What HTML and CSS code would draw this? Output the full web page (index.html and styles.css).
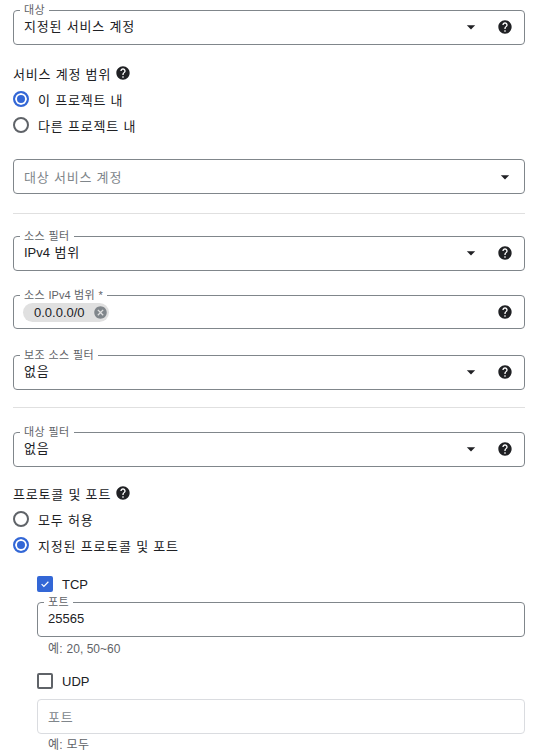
FILE: index.html
```html
<!DOCTYPE html>
<html lang="ko">
<head>
<meta charset="utf-8">
<title>방화벽 규칙</title>
<link rel="stylesheet" href="styles.css">
</head>
<body>
<div class="page">
  <fieldset class="field field-first">
    <legend class="field-label">대상</legend>
    <div class="field-row">
      <span class="field-value">지정된 서비스 계정</span>
      <svg class="arrow" viewBox="0 0 24 24"><path d="M7 10l5 5 5-5z"/></svg>
      <svg class="help" viewBox="0 0 24 24"><path d="M12 2C6.48 2 2 6.48 2 12s4.48 10 10 10 10-4.48 10-10S17.52 2 12 2zm1 17h-2v-2h2v2zm2.07-7.75l-.9.92C13.45 12.9 13 13.5 13 15h-2v-.5c0-1.1.45-2.1 1.17-2.83l1.24-1.26c.37-.36.59-.86.59-1.41 0-1.1-.9-2-2-2s-2 .9-2 2H8c0-2.21 1.79-4 4-4s4 1.79 4 4c0 .88-.36 1.68-.93 2.25z"/></svg>
    </div>
  </fieldset>

  <div class="section-title section-scope">
    <span>서비스 계정 범위</span>
    <svg class="help" viewBox="0 0 24 24"><path d="M12 2C6.48 2 2 6.48 2 12s4.48 10 10 10 10-4.48 10-10S17.52 2 12 2zm1 17h-2v-2h2v2zm2.07-7.75l-.9.92C13.45 12.9 13 13.5 13 15h-2v-.5c0-1.1.45-2.1 1.17-2.83l1.24-1.26c.37-.36.59-.86.59-1.41 0-1.1-.9-2-2-2s-2 .9-2 2H8c0-2.21 1.79-4 4-4s4 1.79 4 4c0 .88-.36 1.68-.93 2.25z"/></svg>
  </div>
  <div class="choice"><span class="radio radio-on"></span><span>이 프로젝트 내</span></div>
  <div class="choice"><span class="radio"></span><span>다른 프로젝트 내</span></div>

  <div class="input input-select">
    <span class="placeholder">대상 서비스 계정</span>
    <svg class="arrow arrow-solo" viewBox="0 0 24 24"><path d="M7 10l5 5 5-5z"/></svg>
  </div>

  <div class="divider divider-1"></div>

  <fieldset class="field field-source">
    <legend class="field-label">소스 필터</legend>
    <div class="field-row">
      <span class="field-value"><span class="latin">IPv4</span> 범위</span>
      <svg class="arrow" viewBox="0 0 24 24"><path d="M7 10l5 5 5-5z"/></svg>
      <svg class="help" viewBox="0 0 24 24"><path d="M12 2C6.48 2 2 6.48 2 12s4.48 10 10 10 10-4.48 10-10S17.52 2 12 2zm1 17h-2v-2h2v2zm2.07-7.75l-.9.92C13.45 12.9 13 13.5 13 15h-2v-.5c0-1.1.45-2.1 1.17-2.83l1.24-1.26c.37-.36.59-.86.59-1.41 0-1.1-.9-2-2-2s-2 .9-2 2H8c0-2.21 1.79-4 4-4s4 1.79 4 4c0 .88-.36 1.68-.93 2.25z"/></svg>
    </div>
  </fieldset>

  <fieldset class="field field-chips">
    <legend class="field-label">소스 <span class="latin">IPv4</span> 범위 *</legend>
    <div class="field-row">
      <span class="field-value">
        <span class="chip">
          <span class="chip-text latin">0.0.0.0/0</span>
          <svg class="chip-remove" viewBox="0 0 24 24"><path d="M12 2C6.47 2 2 6.47 2 12s4.47 10 10 10 10-4.47 10-10S17.53 2 12 2zm5 13.59L15.59 17 12 13.41 8.41 17 7 15.59 10.59 12 7 8.41 8.41 7 12 10.59 15.59 7 17 8.41 13.41 12 17 15.59z"/></svg>
        </span>
      </span>
      <svg class="help" viewBox="0 0 24 24"><path d="M12 2C6.48 2 2 6.48 2 12s4.48 10 10 10 10-4.48 10-10S17.52 2 12 2zm1 17h-2v-2h2v2zm2.07-7.75l-.9.92C13.45 12.9 13 13.5 13 15h-2v-.5c0-1.1.45-2.1 1.17-2.83l1.24-1.26c.37-.36.59-.86.59-1.41 0-1.1-.9-2-2-2s-2 .9-2 2H8c0-2.21 1.79-4 4-4s4 1.79 4 4c0 .88-.36 1.68-.93 2.25z"/></svg>
    </div>
  </fieldset>

  <fieldset class="field field-second">
    <legend class="field-label">보조 소스 필터</legend>
    <div class="field-row">
      <span class="field-value">없음</span>
      <svg class="arrow" viewBox="0 0 24 24"><path d="M7 10l5 5 5-5z"/></svg>
      <svg class="help" viewBox="0 0 24 24"><path d="M12 2C6.48 2 2 6.48 2 12s4.48 10 10 10 10-4.48 10-10S17.52 2 12 2zm1 17h-2v-2h2v2zm2.07-7.75l-.9.92C13.45 12.9 13 13.5 13 15h-2v-.5c0-1.1.45-2.1 1.17-2.83l1.24-1.26c.37-.36.59-.86.59-1.41 0-1.1-.9-2-2-2s-2 .9-2 2H8c0-2.21 1.79-4 4-4s4 1.79 4 4c0 .88-.36 1.68-.93 2.25z"/></svg>
    </div>
  </fieldset>

  <div class="divider divider-2"></div>

  <fieldset class="field field-target">
    <legend class="field-label">대상 필터</legend>
    <div class="field-row">
      <span class="field-value">없음</span>
      <svg class="arrow" viewBox="0 0 24 24"><path d="M7 10l5 5 5-5z"/></svg>
      <svg class="help" viewBox="0 0 24 24"><path d="M12 2C6.48 2 2 6.48 2 12s4.48 10 10 10 10-4.48 10-10S17.52 2 12 2zm1 17h-2v-2h2v2zm2.07-7.75l-.9.92C13.45 12.9 13 13.5 13 15h-2v-.5c0-1.1.45-2.1 1.17-2.83l1.24-1.26c.37-.36.59-.86.59-1.41 0-1.1-.9-2-2-2s-2 .9-2 2H8c0-2.21 1.79-4 4-4s4 1.79 4 4c0 .88-.36 1.68-.93 2.25z"/></svg>
    </div>
  </fieldset>

  <div class="section-title section-proto">
    <span>프로토콜 및 포트</span>
    <svg class="help" viewBox="0 0 24 24"><path d="M12 2C6.48 2 2 6.48 2 12s4.48 10 10 10 10-4.48 10-10S17.52 2 12 2zm1 17h-2v-2h2v2zm2.07-7.75l-.9.92C13.45 12.9 13 13.5 13 15h-2v-.5c0-1.1.45-2.1 1.17-2.83l1.24-1.26c.37-.36.59-.86.59-1.41 0-1.1-.9-2-2-2s-2 .9-2 2H8c0-2.21 1.79-4 4-4s4 1.79 4 4c0 .88-.36 1.68-.93 2.25z"/></svg>
  </div>
  <div class="choice"><span class="radio"></span><span>모두 허용</span></div>
  <div class="choice"><span class="radio radio-on"></span><span>지정된 프로토콜 및 포트</span></div>

  <div class="proto-options">
    <div class="check-row check-tcp">
      <span class="checkbox checkbox-on">
        <svg class="check-mark" viewBox="0 0 16 16"><path d="M3.5 8.2l3 3 6-6.2"/></svg>
      </span>
      <span class="latin">TCP</span>
    </div>
    <fieldset class="field field-port">
      <legend class="field-label">포트</legend>
      <div class="field-row">
        <span class="field-value latin">25565</span>
      </div>
    </fieldset>
    <div class="hint hint-tcp">예: <span class="latin">20, 50~60</span></div>

    <div class="check-row check-udp">
      <span class="checkbox"></span>
      <span class="latin">UDP</span>
    </div>
    <div class="input input-disabled">
      <span class="placeholder">포트</span>
    </div>
    <div class="hint hint-udp">예: 모두</div>
  </div>
</div>
</body>
</html>
```

FILE: styles.css
```css
* {
  box-sizing: border-box;
}

html,
body {
  margin: 0;
  padding: 0;
  background: #ffffff;
}

body {
  font-family: "Liberation Sans", "Noto Sans CJK KR", sans-serif;
  font-size: 13px;
  letter-spacing: 0.8px;
  color: #202124;
  overflow: hidden;
}

.latin {
  letter-spacing: 0;
}

.page {
  width: 538px;
  padding: 0 13px;
}

/* outlined field with floating label */
.field {
  margin: 0;
  min-width: 0;
  padding: 0 11px 7px 10px;
  border: 1px solid #80868b;
  border-radius: 4px;
}

.field-label {
  font-size: 11px;
  line-height: 14px;
  letter-spacing: 0.4px;
  padding: 0 4px;
  margin-left: -4px;
  color: #5f6368;
}

.field-row {
  display: flex;
  align-items: center;
  height: 20px;
}

.field-value {
  flex: 1;
  min-width: 0;
  line-height: 20px;
}

.arrow {
  width: 20px;
  height: 20px;
  margin-right: 16px;
  fill: #202124;
  flex: none;
}

.arrow-solo {
  margin-right: -2px;
}

.help {
  width: 16px;
  height: 16px;
  fill: #202124;
  flex: none;
}

.field-first { margin-top: 3px; }
.field-source { margin-top: 15px; }
.field-chips { margin-top: 17px; padding-bottom: 6px; }
.field-second { margin-top: 19px; }
.field-target { margin-top: 17px; }

/* plain input without label */
.input {
  display: flex;
  align-items: center;
  height: 35px;
  padding: 0 11px 0 10px;
  border: 1px solid #80868b;
  border-radius: 4px;
}

.input-select {
  margin-top: 21px;
}

.input-select .placeholder {
  flex: 1;
}

.placeholder {
  color: #80868b;
}

.input-disabled {
  margin-top: 7px;
  border-color: #dadce0;
}

.divider {
  height: 1px;
  background: #e0e0e0;
}

.divider-1 { margin-top: 19px; }
.divider-2 { margin-top: 17px; }

/* section titles */
.section-title {
  display: flex;
  align-items: center;
  gap: 4px;
  height: 26px;
}

.section-scope { margin-top: 15px; }
.section-proto { margin-top: 13px; }

/* radios */
.choice {
  display: flex;
  align-items: center;
  gap: 9px;
  height: 26px;
}

.radio {
  width: 16px;
  height: 16px;
  border: 2px solid #5f6368;
  border-radius: 50%;
  flex: none;
}

.radio-on {
  border-color: #3367d6;
  background: #3367d6;
  box-shadow: inset 0 0 0 2px #ffffff;
}

/* chips */
.chip {
  display: inline-flex;
  align-items: center;
  height: 19px;
  margin-left: -1px;
  padding: 0 1px 0 11px;
  gap: 8px;
  border-radius: 10px;
  background: #e0e0e0;
  vertical-align: middle;
}

.chip-text {
  line-height: 19px;
}

.chip-remove {
  width: 15px;
  height: 15px;
  fill: #80868b;
}

/* protocol options */
.proto-options {
  padding-left: 24px;
}

.check-row {
  display: flex;
  align-items: center;
  gap: 9px;
  height: 22px;
}

.check-tcp { margin-top: 15px; }
.check-udp { margin-top: 13px; }

.checkbox {
  display: flex;
  align-items: center;
  justify-content: center;
  width: 16px;
  height: 16px;
  border: 2px solid #5f6368;
  border-radius: 2px;
  flex: none;
}

.checkbox-on {
  border-color: #3367d6;
  background: #3367d6;
}

.check-mark {
  width: 14px;
  height: 14px;
  fill: none;
  stroke: #ffffff;
  stroke-width: 1.6;
}

.hint {
  padding-left: 11px;
  font-size: 12px;
  line-height: 16px;
  letter-spacing: 0.3px;
  color: #5f6368;
}

.hint-tcp { margin-top: 4px; }
.hint-udp { margin-top: 3px; }
```
